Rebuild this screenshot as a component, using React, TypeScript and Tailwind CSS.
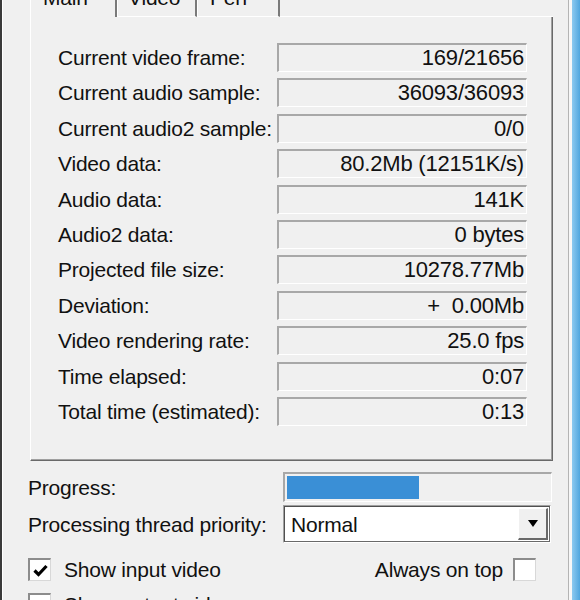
import React from "react";

const stats: [string, string][] = [
    ["Current video frame:", "169/21656"],
    ["Current audio sample:", "36093/36093"],
    ["Current audio2 sample:", "0/0"],
    ["Video data:", "80.2Mb (12151K/s)"],
    ["Audio data:", "141K"],
    ["Audio2 data:", "0 bytes"],
    ["Projected file size:", "10278.77Mb"],
    ["Deviation:", "+  0.00Mb"],
    ["Video rendering rate:", "25.0 fps"],
    ["Time elapsed:", "0:07"],
    ["Total time (estimated):", "0:13"],
];

function CheckBox({ checked }: { checked?: boolean }) {
    return (
        <div className="w-[23px] h-[23px] shrink-0 border-t-2 border-l-2 border-t-[#8c8c8c] border-l-[#8c8c8c] border-b border-r border-b-[#d8d8d8] border-r-[#d8d8d8] bg-white flex items-center justify-center">
            {checked && (
                <svg width="15" height="13" viewBox="0 0 15 13">
                    <path d="M1.5 6.5 L5.5 10.5 L13.5 2" fill="none" stroke="#000" strokeWidth="3.2" />
                </svg>
            )}
        </div>
    );
}

export default function App() {
    return (
        <div
            className="w-[580px] h-[600px] overflow-hidden bg-[#f0f0f0] flex text-[21px] leading-none text-[#111] tracking-[-0.2px]"
            style={{ fontFamily: '"Liberation Sans", Arial, sans-serif' }}
        >
            <div className="w-[2px] bg-[#3a3a3a]" />
            <div className="w-[1px] bg-white" />

            <div className="w-[565px] flex flex-col">
                {/* tab control */}
                <div className="ml-[27px] w-[523px] flex flex-col">
                    <div className="flex h-[30px] mt-[-13px]">
                        <div className="w-[87px] border-l border-white border-r-2 border-r-[#7a7a7a] pl-[12px]">Main</div>
                        <div className="w-[80px] border-l border-white border-r-2 border-r-[#7a7a7a] border-b border-b-white pl-[10px]">Video</div>
                        <div className="w-[83px] border-l border-white border-r-2 border-r-[#7a7a7a] border-b border-b-white pl-[12px]">Perf</div>
                        <div className="flex-1 border-b border-white" />
                    </div>
                    <div className="h-[444px] border-l border-white border-r border-b border-r-[#696969] border-b-[#696969] shadow-[inset_-1px_-1px_0_#a0a0a0] pl-[27px] pt-[26px]">
                        <div className="grid grid-cols-[219px_250px] gap-y-[6.4px]">
                            {stats.map(([label, value]) => (
                                <React.Fragment key={label}>
                                    <div className="h-[29px] flex items-center whitespace-nowrap">{label}</div>
                                    <div className="h-[29px] flex items-center justify-end pr-[2px] text-[22px] border-t-2 border-l-2 border-t-[#a8a8a8] border-l-[#a8a8a8] border-b border-r border-b-white border-r-white whitespace-pre">
                                        {value}
                                    </div>
                                </React.Fragment>
                            ))}
                        </div>
                    </div>
                </div>

                {/* bottom controls */}
                <div className="ml-[25px] flex flex-col">
                    <div className="mt-[11px] flex items-center h-[30px]">
                        <div className="w-[255px]">Progress:</div>
                        <div className="w-[269px] h-[30px] border-t-2 border-l-2 border-t-[#a8a8a8] border-l-[#a8a8a8] border-b border-r border-b-white border-r-white p-[2px] flex">
                            <div className="w-[132px] h-full bg-[#3a8fd6]" />
                        </div>
                    </div>

                    <div className="mt-[3px] flex items-center h-[38px]">
                        <div className="w-[255px] whitespace-nowrap">Processing thread priority:</div>
                        <div className="w-[268px] h-[38px] border-t border-l border-t-[#a0a0a0] border-l-[#a0a0a0] border-b border-r border-b-white border-r-white">
                            <div className="h-full border-t border-l border-t-[#505050] border-l-[#505050] border-b border-r border-b-[#696969] border-r-[#696969] bg-white flex items-center pr-[1px]">
                                <div className="flex-1 pl-[6px]">Normal</div>
                                <div className="w-[30px] h-[32px] bg-[#f0f0f0] border-t border-l border-white border-b-2 border-r-2 border-b-[#696969] border-r-[#696969] flex items-center justify-center">
                                    <svg width="10" height="7" viewBox="0 0 10 7">
                                        <path d="M0 0 H10 L5 7 Z" fill="#000" />
                                    </svg>
                                </div>
                            </div>
                        </div>
                    </div>

                    <div className="mt-[15px] flex items-center h-[23px] w-[508px]">
                        <CheckBox checked />
                        <div className="ml-[13px] flex-1">Show input video</div>
                        <div className="mr-[10px]">Always on top</div>
                        <CheckBox />
                    </div>

                    <div className="mt-[12px] flex items-center h-[23px]">
                        <CheckBox />
                        <div className="ml-[13px]">Show output video</div>
                    </div>
                </div>
            </div>

            <div className="w-[1px] bg-[#b4b4b4]" />
            <div className="w-[3px] bg-[#f7f7f7]" />
            <div className="w-[8px] bg-gradient-to-r from-[#8ccaf0] to-[#4fa6de]" />
        </div>
    );
}
